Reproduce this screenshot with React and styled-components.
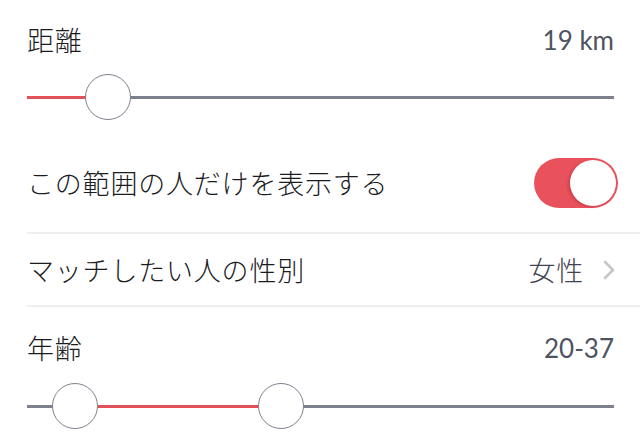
import React from "react";
import styled, { createGlobalStyle } from "styled-components";

const GlobalStyle = createGlobalStyle`
    html, body {
        margin: 0;
        padding: 0;
        background: #ffffff;
    }
    body {
        font-family: "Noto Sans CJK JP", "Noto Sans", sans-serif;
    }
`;

const Page = styled.div`
    width: 640px;
    height: 446px;
    overflow: hidden;
    background: #ffffff;
`;

const Section = styled.div`
    margin-left: 27px;
    padding: ${(p) => p.$top}px 26px 0 0;
`;

const Header = styled.div`
    height: 32px;
    display: flex;
    align-items: center;
    justify-content: space-between;
`;

const Label = styled.span`
    font-size: 27px;
    font-weight: 300;
    line-height: 32px;
    color: #1c1c1f;
    letter-spacing: 0.8px;
`;

const Value = styled.span`
    font-family: "Lato", "Noto Sans CJK JP", sans-serif;
    font-size: 26px;
    line-height: 32px;
    color: #4e5362;
`;

const SliderBox = styled.div`
    position: relative;
    height: 46px;
    margin-top: ${(p) => p.$gap}px;
    display: flex;
    align-items: center;
`;

const Track = styled.div`
    width: 100%;
    height: 3px;
    background: #7d818e;
`;

const Fill = styled.div`
    position: absolute;
    top: 21.5px;
    height: 3px;
    background: #e2505a;
`;

const Thumb = styled.div`
    position: absolute;
    top: 0;
    width: 46px;
    height: 46px;
    margin-left: -23px;
    box-sizing: border-box;
    border-radius: 50%;
    border: 1.5px solid #7d818e;
    background: #ffffff;
`;

const Row = styled.div`
    margin-left: 27px;
    padding: ${(p) => p.$pt}px ${(p) => p.$right}px ${(p) => p.$pb}px 0;
    height: ${(p) => p.$h}px;
    display: flex;
    align-items: center;
    justify-content: space-between;
    border-bottom: 2px solid #eeeeee;
    box-sizing: border-box;
`;

const Switch = styled.div`
    width: 84px;
    height: 50px;
    border-radius: 25px;
    background: #e9525c;
    display: flex;
    align-items: center;
    justify-content: flex-end;
    padding: 0 2px;
    box-sizing: border-box;
`;

const Knob = styled.div`
    width: 46px;
    height: 46px;
    border-radius: 50%;
    background: #ffffff;
    box-shadow: -2px 1px 3px rgba(120, 20, 30, 0.25);
`;

const Pick = styled.div`
    display: flex;
    align-items: center;
    gap: 19px;
`;

const PickValue = styled.span`
    font-size: 27px;
    font-weight: 300;
    letter-spacing: 0.8px;
    color: #3f4452;
`;

const Slider = ({ gap, from = 0, to, thumbs }) => (
    <SliderBox $gap={gap}>
        <Track />
        <Fill style={{ left: from, width: to - from }} />
        {thumbs.map((t) => (
            <Thumb key={t} style={{ left: t }} />
        ))}
    </SliderBox>
);

const Chevron = () => (
    <svg width="12" height="22" viewBox="0 0 12 22">
        <polyline
            points="2,3 10,11 2,19"
            fill="none"
            stroke="#c6c6ca"
            strokeWidth="2.6"
            strokeLinecap="round"
            strokeLinejoin="round"
        />
    </svg>
);

const App = () => {
    return (
        <Page>
            <GlobalStyle />
            <Section $top={24}>
                <Header>
                    <Label>距離</Label>
                    <Value>19 km</Value>
                </Header>
                <Slider gap={18} from={0} to={81} thumbs={[81]} />
            </Section>
            <Row $h={114} $pt={38} $pb={24} $right={22}>
                <Label>この範囲の人だけを表示する</Label>
                <Switch>
                    <Knob />
                </Switch>
            </Row>
            <Row $h={73} $pt={0} $pb={0} $right={25}>
                <Label>マッチしたい人の性別</Label>
                <Pick>
                    <PickValue>女性</PickValue>
                    <Chevron />
                </Pick>
            </Row>
            <Section $top={25}>
                <Header>
                    <Label>年齢</Label>
                    <Value>20-37</Value>
                </Header>
                <Slider gap={19} from={48} to={254} thumbs={[48, 254]} />
            </Section>
        </Page>
    );
};

export default App;
